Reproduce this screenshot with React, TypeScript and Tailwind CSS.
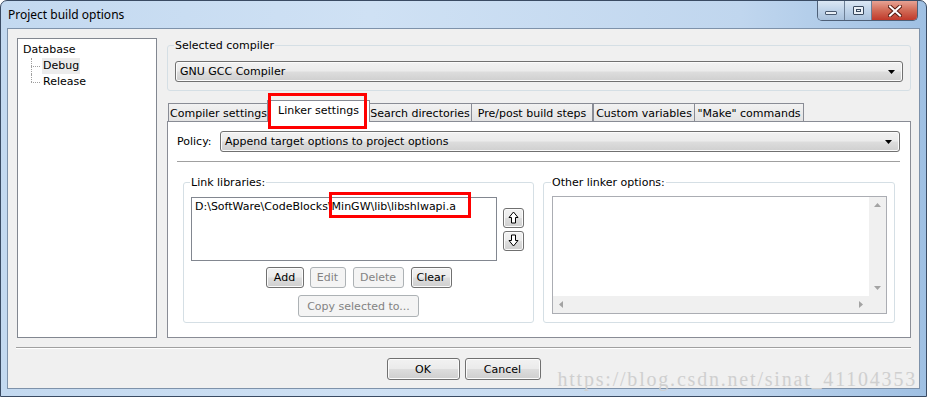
import React from "react"

const ui = "font-['DejaVu_Sans',sans-serif] text-[11px] leading-[13px] text-black"
const face =
  "rounded-[3px] border border-[#707070] bg-[linear-gradient(#f2f2f2_0%,#ebebeb_48%,#dddddd_52%,#cfcfcf_100%)] shadow-[inset_0_0_0_1px_#fbfbfb]"
const btn = `flex items-center justify-center ${face}`
const btnOff = "flex items-center justify-center rounded-[3px] border border-[#adb2b5] bg-[#f4f4f4] text-[#838383]"
const group = "rounded-[3px] border border-[#d5dfe5] min-w-0"

function Caret() {
  return (
    <svg width="7" height="4" viewBox="0 0 7 4">
      <path d="M0 0h7L3.5 4z" fill="#000" />
    </svg>
  )
}

function Combo({ text, className }: { text: string; className: string }) {
  return (
    <div className={`flex items-center justify-between pl-[4px] pr-[7px] ${face} ${className}`}>
      <span>{text}</span>
      <Caret />
    </div>
  )
}

function Arrow({ down }: { down?: boolean }) {
  return (
    <svg width="11" height="13" viewBox="0 0 11 13" className={down ? "rotate-180" : ""}>
      <path d="M5.5 1L10 6.5H7.5V12H3.5V6.5H1Z" fill="#fff" stroke="#000" strokeWidth="1" strokeLinejoin="miter" />
    </svg>
  )
}

function Tab({ label, className }: { label: string; className: string }) {
  return (
    <div
      className={`mb-[1px] flex h-[18px] items-center justify-center border border-b-0 border-[#898c95] bg-[linear-gradient(#f2f2f2,#e3e3e3)] pt-[1px] ${className}`}
    >
      {label}
    </div>
  )
}

function TitleButtons() {
  return (
    <div className="ml-auto mr-[8px] flex h-[20px] self-start overflow-hidden rounded-b-[5px] border border-t-0 border-[#4e6078]">
      <div className="flex w-[27px] items-center justify-center border-r border-[#6d7f96] bg-[linear-gradient(#dbe7f4,#bfd3e9_50%,#a9c1dc)]">
        <div className="mt-[4px] h-[4px] w-[12px] rounded-[1px] border border-[#4a5a70] bg-[#e9eff6]" />
      </div>
      <div className="flex w-[27px] items-center justify-center border-r border-[#6d7f96] bg-[linear-gradient(#dbe7f4,#bfd3e9_50%,#a9c1dc)]">
        <div className="h-[9px] w-[11px] rounded-[1px] border border-[#39495e] bg-[#e9eff6] p-[2px]">
          <div className="h-full w-full border border-[#39495e]" />
        </div>
      </div>
      <div className="flex w-[45px] items-center justify-center bg-[linear-gradient(#e7a394,#d16a56_50%,#c0392b)]">
        <svg width="14" height="12" viewBox="0 0 14 12">
          <path d="M2 1.5L12 10.5M12 1.5L2 10.5" stroke="#5a1e14" strokeWidth="4" strokeLinecap="square" />
          <path d="M2 1.5L12 10.5M12 1.5L2 10.5" stroke="#fff" strokeWidth="2" strokeLinecap="square" />
        </svg>
      </div>
    </div>
  )
}

export default function App() {
  return (
    <div className={`relative h-[397px] w-[927px] overflow-hidden bg-white ${ui}`}>
      <div className="flex h-full flex-col rounded-t-[7px] border border-[#3a4b63] bg-[linear-gradient(90deg,#c3d9f0,#cfe1f4_40%,#c0d6ee_80%,#9fc0e3)]">
        {/* title bar */}
        <div className="flex h-[27px] items-center">
          <span className="pl-[7px] font-['Noto_Sans',sans-serif] text-[12px] leading-[14px]">Project build options</span>
          <TitleButtons />
        </div>

        {/* client area */}
        <div className="mx-[6px] mb-[7px] flex flex-1 flex-col border border-[#7e92aa] bg-[#f0f0f0]">
          <div className="flex gap-[10px] pl-[9px] pr-[8px] pt-[9px]">
            {/* tree */}
            <div className="h-[300px] w-[140px] shrink-0 border border-[#828790] bg-white pl-[5px] pt-[3px]">
              <div className="h-[16px] leading-[16px]">Database</div>
              <div className="relative pl-[19px]">
                <div className="absolute left-[8px] top-0 h-[16px] border-l border-dotted border-[#a0a0a0]" />
                <div className="absolute left-[8px] top-[8px] w-[9px] border-t border-dotted border-[#a0a0a0]" />
                <div className="absolute left-[8px] top-[16px] h-[8px] border-l border-dotted border-[#a0a0a0]" />
                <div className="absolute left-[8px] top-[24px] w-[9px] border-t border-dotted border-[#a0a0a0]" />
                <div className="h-[16px] w-fit bg-[#ececec] px-[1px] leading-[16px]">Debug</div>
                <div className="h-[16px] px-[1px] leading-[16px]">Release</div>
              </div>
            </div>

            {/* right column */}
            <div className="flex min-w-0 flex-1 flex-col">
              <fieldset className={`${group} px-[7px] pb-[8px]`}>
                <legend className="-ml-[1px] px-[1px] pt-[1px]">Selected compiler</legend>
                <Combo text="GNU GCC Compiler" className="mt-[9px] h-[21px]" />
              </fieldset>

              {/* tabs */}
              <div className="relative z-10 -mb-[1px] mt-[9px] flex h-[22px] items-end pl-[1px]">
                <Tab label="Compiler settings" className="w-[101px]" />
                <div className="relative z-10 -mx-[2px] flex h-[22px] w-[103px] items-start justify-center border border-b-0 border-[#898c95] bg-white pt-[3px]">
                  Linker settings
                  <div className="absolute -bottom-[7px] -top-[8px] left-0 right-[2px] border-[3px] border-[#ff0000]" />
                </div>
                <Tab label="Search directories" className="w-[104px]" />
                <Tab label="Pre/post build steps" className="w-[121px] border-l-0" />
                <Tab label="Custom variables" className="w-[102px]" />
                <Tab label={'"Make" commands'} className="w-[109px] border-l-0" />
              </div>

              <div className="flex h-[217px] flex-col border border-[#898c95] bg-white pl-[9px] pr-[10px] pt-[9px]">
                <div className="flex items-center">
                  <span className="w-[43px]">Policy:</span>
                  <Combo text="Append target options to project options" className="h-[21px] flex-1" />
                </div>
                <div className="mt-[9px] border-t border-[#a0a0a0]" />

                <div className="ml-[6px] mt-[14px] flex gap-[9px]">
                  <fieldset className={`${group} w-[351px] px-[7px] pb-[5px]`}>
                    <legend className="-ml-[1px] px-[1px]">Link libraries:</legend>
                    <div className="mt-[8px] flex items-center gap-[6px]">
                      <div className="relative h-[64px] w-[306px] border border-[#828790] bg-white pl-[3px] pt-[2px]">
                        D:\SoftWare\CodeBlocks\MinGW\lib\libshlwapi.a
                        <div className="absolute left-[137px] top-[-6px] h-[26px] w-[142px] border-[3px] border-[#ff0000]" />
                      </div>
                      <div className="flex flex-col gap-[3px]">
                        <div className={`${btn} h-[20px] w-[21px]`}>
                          <Arrow />
                        </div>
                        <div className={`${btn} h-[20px] w-[21px]`}>
                          <Arrow down />
                        </div>
                      </div>
                    </div>
                    <div className="mt-[6px] flex justify-center">
                      <div className={`${btn} h-[21px] w-[38px]`}>Add</div>
                      <div className={`${btnOff} ml-[6px] h-[21px] w-[36px]`}>Edit</div>
                      <div className={`${btnOff} ml-[7px] h-[21px] w-[51px]`}>Delete</div>
                      <div className={`${btn} ml-[7px] h-[21px] w-[41px]`}>Clear</div>
                    </div>
                    <div className="mt-[7px] flex justify-center">
                      <div className={`${btnOff} h-[22px] w-[121px]`}>Copy selected to...</div>
                    </div>
                  </fieldset>

                  <fieldset className={`${group} w-[352px] px-[8px] pb-[7px]`}>
                    <legend className="-ml-[1px] px-[1px]">Other linker options:</legend>
                    <div className="mt-[7px] grid h-[118px] w-[335px] grid-cols-[1fr_17px] grid-rows-[1fr_17px] border border-[#abadb3] bg-white">
                      <div />
                      <div className="flex flex-col items-center justify-between bg-[#f0f0f0] py-[6px]">
                        <svg width="7" height="4" viewBox="0 0 7 4">
                          <path d="M0 4L3.5 0L7 4z" fill="#a3a3a3" />
                        </svg>
                        <svg width="7" height="4" viewBox="0 0 7 4">
                          <path d="M0 0h7L3.5 4z" fill="#a3a3a3" />
                        </svg>
                      </div>
                      <div className="flex items-center justify-between bg-[#f0f0f0] px-[6px]">
                        <svg width="4" height="7" viewBox="0 0 4 7">
                          <path d="M4 0V7L0 3.5z" fill="#a3a3a3" />
                        </svg>
                        <svg width="4" height="7" viewBox="0 0 4 7">
                          <path d="M0 0V7L4 3.5z" fill="#a3a3a3" />
                        </svg>
                      </div>
                      <div className="bg-[#f0f0f0]" />
                    </div>
                  </fieldset>
                </div>
              </div>
            </div>
          </div>

          <div className="mx-[8px] mt-[9px] border-t border-[#a0a0a0] shadow-[0_1px_0_#fff]" />
          <div className="mt-[10px] flex justify-center gap-[5px]">
            <div className={`${btn} h-[22px] w-[73px]`}>OK</div>
            <div className={`${btn} h-[22px] w-[76px]`}>Cancel</div>
          </div>
        </div>
      </div>

      <div className="absolute bottom-[8px] right-[10px] font-['Liberation_Serif',serif] text-[20px] leading-[20px] tracking-[1.8px] text-[#cfcfcf]">
        https://blog.csdn.net/sinat_41104353
      </div>
    </div>
  )
}
